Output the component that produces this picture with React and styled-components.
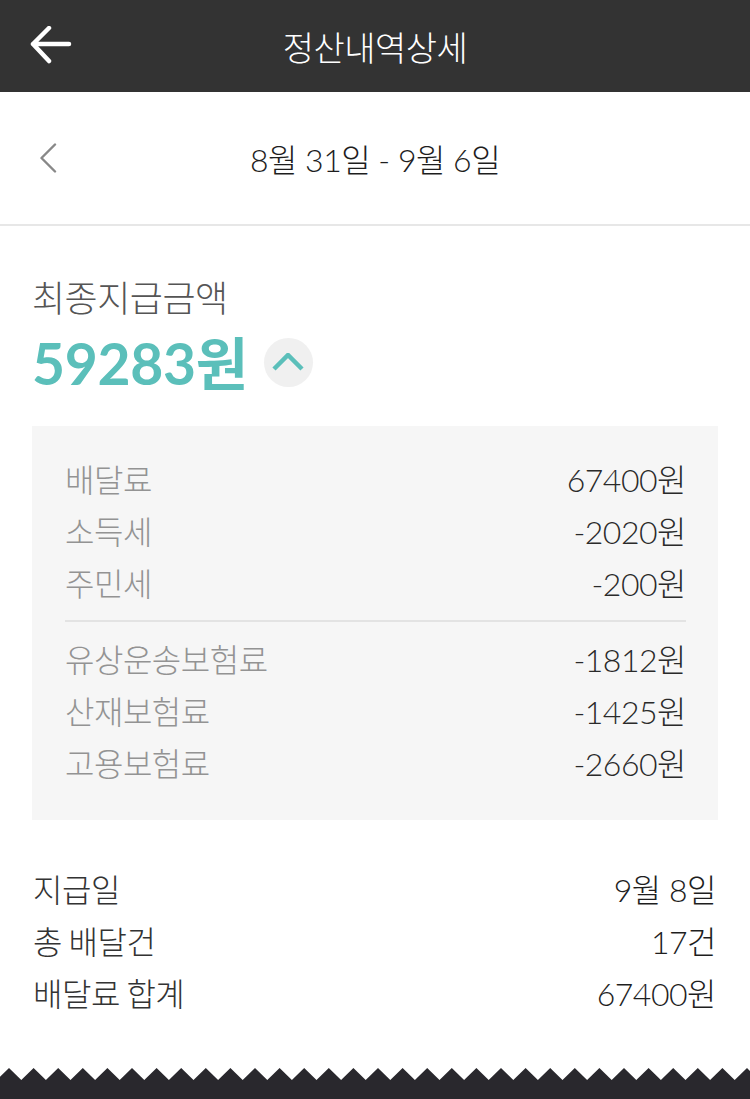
import React from "react";
import styled, { createGlobalStyle } from "styled-components";

const GlobalStyle = createGlobalStyle`
  html, body {
    margin: 0;
    padding: 0;
    background: #ffffff;
  }
  body {
    font-family: Lato, "Noto Sans CJK KR", sans-serif;
  }
`;

const Page = styled.div`
  width: 750px;
  min-height: 1099px;
  display: flex;
  flex-direction: column;
  background: #ffffff;
`;

const Header = styled.header`
  height: 92px;
  background: #333333;
  display: grid;
  grid-template-columns: 100px 1fr 100px;
  align-items: center;
`;

const IconButton = styled.button`
  border: 0;
  background: none;
  padding: 0 0 0 ${(p) => p.inset || 0}px;
  height: 100%;
  display: flex;
  align-items: center;
  cursor: pointer;
`;

const HeaderTitle = styled.h1`
  margin: 0;
  text-align: center;
  color: #ffffff;
  font-family: "Noto Sans CJK KR", sans-serif;
  font-weight: 300;
  font-size: 34px;
  letter-spacing: -0.5px;
`;

const DateBar = styled.div`
  height: 132px;
  border-bottom: 2px solid #e7e7e7;
  display: grid;
  grid-template-columns: 100px 1fr 100px;
  align-items: center;
`;

const DateText = styled.div`
  text-align: center;
  color: #1e1e1e;
  font-family: Lato, "Noto Sans CJK KR", sans-serif;
  font-weight: 300;
  font-size: 32px;
  letter-spacing: -0.5px;
`;

const Summary = styled.section`
  padding: 48px 32px 0;
`;

const SummaryLabel = styled.div`
  font-family: "Noto Sans CJK KR", sans-serif;
  font-weight: 300;
  font-size: 36px;
  line-height: 44px;
  color: #555555;
  letter-spacing: -0.5px;
`;

const AmountRow = styled.div`
  margin-top: 10px;
  display: flex;
  align-items: center;
  gap: 16px;
  height: 64px;
`;

const Amount = styled.div`
  font-family: Lato, "Noto Sans CJK KR", sans-serif;
  font-weight: 700;
  font-size: 57px;
  color: #5bbfba;
  letter-spacing: -0.3px;
`;

const ToggleButton = styled.button`
  width: 49px;
  height: 49px;
  border-radius: 50%;
  border: 0;
  background: #f0f0f0;
  display: flex;
  align-items: center;
  justify-content: center;
  padding: 0;
  margin-top: 4px;
  cursor: pointer;
`;

const Breakdown = styled.div`
  margin-top: 34px;
  background: #f6f6f6;
  padding: 26px 32px 32px 33px;
`;

const Divider = styled.hr`
  border: 0;
  height: 2px;
  background: #e3e3e3;
  margin: 12px 0 10px;
`;

const Row = styled.div`
  display: flex;
  justify-content: space-between;
  align-items: center;
  height: 52px;
`;

const RowLabel = styled.span`
  font-family: "Noto Sans CJK KR", sans-serif;
  font-weight: 300;
  font-size: 32px;
  color: ${(p) => (p.light ? "#939393" : "#333333")};
  letter-spacing: -0.5px;
`;

const RowValue = styled.span`
  font-family: Lato, "Noto Sans CJK KR", sans-serif;
  font-weight: 300;
  font-size: 32px;
  color: ${(p) => (p.light ? "#2a2a2a" : "#1e1e1e")};
  letter-spacing: -0.5px;
`;

const Totals = styled.div`
  margin-top: 42px;
  padding: 0 34px 0 33px;
`;

const ZigzagFooter = styled.svg`
  display: block;
  margin-top: auto;
  width: 750px;
  height: 31px;
`;

const taxes = [
  ["배달료", "67400원"],
  ["소득세", "-2020원"],
  ["주민세", "-200원"],
];

const deductions = [
  ["유상운송보험료", "-1812원"],
  ["산재보험료", "-1425원"],
  ["고용보험료", "-2660원"],
];

const totals = [
  ["지급일", "9월 8일"],
  ["총 배달건", "17건"],
  ["배달료 합계", "67400원"],
];

function zigzagPoints() {
  const period = 24.6;
  const pts = ["0,31", "0,12"];
  let x = 9 - period;
  while (x < 760) {
    pts.push(`${x.toFixed(1)},0`);
    pts.push(`${(x + period / 2).toFixed(1)},12`);
    x += period;
  }
  pts.push("750,31");
  return pts.join(" ");
}

export default function App() {
  return (
    <Page>
      <GlobalStyle />
      <Header>
        <IconButton inset={30} aria-label="뒤로">
          <svg width="42" height="40" viewBox="0 0 42 40" fill="none">
            <path
              d="M3 18 H39 M19 2 L3 18 L19 35"
              stroke="#ffffff"
              strokeWidth="4.5"
              strokeLinecap="round"
              strokeLinejoin="round"
            />
          </svg>
        </IconButton>
        <HeaderTitle>정산내역상세</HeaderTitle>
        <div />
      </Header>

      <DateBar>
        <IconButton inset={39} aria-label="이전 주">
          <svg width="20" height="30" viewBox="0 0 20 30" fill="none">
            <path
              d="M16 1.5 L2.5 15 L16 28.5"
              stroke="#888888"
              strokeWidth="2.4"
              strokeLinecap="round"
              strokeLinejoin="round"
            />
          </svg>
        </IconButton>
        <DateText>8월 31일 - 9월 6일</DateText>
        <div />
      </DateBar>

      <Summary>
        <SummaryLabel>최종지급금액</SummaryLabel>
        <AmountRow>
          <Amount>59283원</Amount>
          <ToggleButton aria-label="접기">
            <svg width="32" height="18" viewBox="0 0 32 18" fill="none">
              <path
                d="M2 16 L16 2 L30 16"
                stroke="#5bbfba"
                strokeWidth="4.5"
                strokeLinejoin="miter"
              />
            </svg>
          </ToggleButton>
        </AmountRow>

        <Breakdown>
          {taxes.map(([label, value]) => (
            <Row key={label}>
              <RowLabel light>{label}</RowLabel>
              <RowValue light>{value}</RowValue>
            </Row>
          ))}
          <Divider />
          {deductions.map(([label, value]) => (
            <Row key={label}>
              <RowLabel light>{label}</RowLabel>
              <RowValue light>{value}</RowValue>
            </Row>
          ))}
        </Breakdown>
      </Summary>

      <Totals>
        {totals.map(([label, value]) => (
          <Row key={label}>
            <RowLabel>{label}</RowLabel>
            <RowValue>{value}</RowValue>
          </Row>
        ))}
      </Totals>

      <ZigzagFooter viewBox="0 0 750 31" preserveAspectRatio="none">
        <polygon points={zigzagPoints()} fill="#29282d" />
      </ZigzagFooter>
    </Page>
  );
}
